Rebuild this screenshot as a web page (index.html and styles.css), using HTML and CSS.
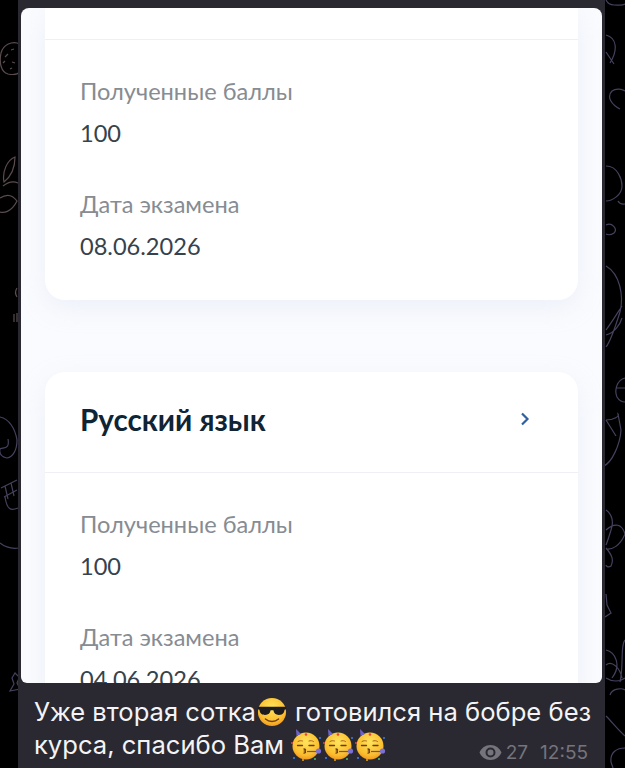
FILE: index.html
```html
<!DOCTYPE html>
<html lang="ru">
<head>
	<meta charset="utf-8">
	<title>Результаты экзаменов</title>
	<link rel="stylesheet" href="styles.css">
</head>
<body>

<!-- chat wallpaper, only the edges show around the bubble -->
<svg class="wallpaper" width="625" height="768" viewBox="0 0 625 768" fill="none">
	<g class="doodle-warm">
		<path d="M20 44C12 40 3 45 1 53C-1 63 1 72 8 74C13 75 18 74 20 72"/>
		<path d="M5 57l3-3M11 50l3-1M3 63l2-2M12 62l3 1M10 69l2-1"/>
		<path d="M15 157C7 160 2 172 4 182C9 178 15 170 15 157ZM3 186C8 182 14 181 18 183M0 198C6 194 12 194 17 201C11 213 3 213 0 212"/>
		<path d="M17 288c-2 3-2 6 0 9M17 313v9M14 314v8"/>
	</g>
	<g class="doodle-cold">
		<path d="M0 417C9 419 15 428 17 440C17 450 13 457 7 458C2 457-1 454 0 449C3 447 10 450 8 439"/>
		<path d="M1 488l16-8M4 497l13-7M5 486l3 13M11 483l3 13M5 497C7 510 11 511 18 508M0 543C6 548 12 549 19 548"/>
		<path d="M15 673l3 3 2 0-3 7 3 6-10 2 4-7-2-6z"/>
		<path d="M606 0c2 4 4 5 8 5 4 0 9 1 11-1M606 35C617 38 618 50 610 63M606 52l8 12M612 91c4-3 10-2 13 0M612 91c-6 6 0 14 8 18"/>
		<path d="M606 166C618 166 622 180 622 186 622 195 612 201 606 201M618 201c2 4 5 3 7 3M606 225c6-3 12 4 8 8-3 2-6 2-8 1"/>
		<path d="M606 266C620 274 624 296 620 312 615 328 610 342 606 347M606 330C612 322 618 312 622 306M606 335C614 333 620 325 622 318"/>
		<path d="M625 378C617 380 614 390 617 397 620 402 625 402 625 402M616 388h9"/>
		<path d="M606 420C614 420 620 416 618 414L621 430C620 445 612 462 604 466M606 420L616 436"/>
		<path d="M606 510C612 514 614 522 611 530 608 540 606 545 606 545M606 530C615 522 622 524 625 534 620 546 612 550 606 549M606 548C612 555 614 560 611 566 608 568 606 566 606 565"/>
		<path d="M606 594l1 11 4 8-6 4"/>
		<path d="M606 650C615 652 622 665 612 678M606 665C612 660 620 668 622 678M625 640C620 645 624 665 620 682M606 678C612 682 620 682 625 678M610 695C612 688 622 688 625 690"/>
		<path d="M606 716C612 722 618 730 625 736M625 748C617 748 610 752 611 762L613 768"/>
	</g>
</svg>

<!-- emoji drawn once, used below -->
<svg class="defs" width="0" height="0">
	<defs>
		<radialGradient id="faceFill" cx="50%" cy="35%" r="70%">
			<stop offset="0" stop-color="#ffe45c"/>
			<stop offset="0.7" stop-color="#fbbd2e"/>
			<stop offset="1" stop-color="#ef8f1c"/>
		</radialGradient>
		<symbol id="emojiCool" viewBox="0 0 32 32">
			<circle cx="16" cy="16" r="15" fill="url(#faceFill)"/>
			<path d="M1 10.500h30v2.600l-1.600.6c-.5 4-2.600 5.500-6 5.500-3.600 0-5.400-2-5.900-5h-3c-.5 3-2.300 5-5.900 5-3.400 0-5.500-1.500-6-5.500l-1.600-.6z" fill="#1d1c20"/>
			<path d="M9 23.500c4 3.500 10 3.500 14 0" stroke="#6e3a12" stroke-width="1.500" fill="none" stroke-linecap="round"/>
		</symbol>
		<symbol id="emojiParty" viewBox="0 0 32 32">
			<circle cx="15" cy="17" r="13.500" fill="url(#faceFill)"/>
			<path d="M10 5L5 0l.5 7z" fill="#6d63c9"/>
			<path d="M7 12.500c1.500-1 3-1 4.500-.5M18 12c1.500-.5 3-.5 4.500 .5" stroke="#a9641c" stroke-width="1" fill="none" stroke-linecap="round"/>
			<path d="M6.500 16.500h5M18 16.500h5" stroke="#6e3a12" stroke-width="1.300" fill="none" stroke-linecap="round"/>
			<path d="M13 20c2 .5 2 1.300 .5 2 1.500 .7 1.500 1.700-.5 2.200" stroke="#6e3a12" stroke-width="1.300" fill="none" stroke-linecap="round"/>
			<path d="M16 22.500h9" stroke="#5a50b4" stroke-width="1.200"/>
			<circle cx="27.500" cy="22" r="2.600" fill="#7b70d6"/>
			<circle cx="15" cy="5.500" r="1.300" fill="#e8463a"/>
			<circle cx="1" cy="14" r="1" fill="#e8463a"/>
			<circle cx="3" cy="29" r="1.100" fill="#3f7de0"/>
			<circle cx="24" cy="30" r="1" fill="#4ec06a"/>
			<circle cx="29" cy="9" r="1" fill="#3f7de0"/>
			<circle cx="12" cy="31" r="1" fill="#e8a33a"/>
		</symbol>
	</defs>
</svg>

<div class="bubble">
	<div class="photo">
		<section class="card">
			<div class="card-head card-head-cut"></div>
			<div class="card-body">
				<p class="label">Полученные баллы</p>
				<p class="value">100</p>
				<p class="label label-next">Дата экзамена</p>
				<p class="value">08.06.2026</p>
			</div>
		</section>

		<section class="card">
			<div class="card-head">
				<h2 class="subject">Русский язык</h2>
				<svg class="chevron" width="10" height="14" viewBox="0 0 10 14" fill="none">
					<path d="M2 1.500l5.500 5.500-5.500 5.500" stroke="#30609f" stroke-width="2.200"/>
				</svg>
			</div>
			<div class="card-body">
				<p class="label">Полученные баллы</p>
				<p class="value">100</p>
				<p class="label label-next">Дата экзамена</p>
				<p class="value">04.06.2026</p>
			</div>
		</section>
	</div>

	<div class="caption">
		<div class="caption-line">Уже вторая сотка<svg class="emoji emoji-cool"><use href="#emojiCool"/></svg> готовился на бобре без</div>
		<div class="caption-line caption-last">
			<span>курса, спасибо Вам
				<svg class="emoji emoji-party"><use href="#emojiParty"/></svg><svg class="emoji emoji-party"><use href="#emojiParty"/></svg><svg class="emoji emoji-party"><use href="#emojiParty"/></svg>
			</span>
			<span class="meta">
				<svg class="eye" width="23" height="15" viewBox="0 0 23 15">
					<path d="M11.500 0C6.500 0 2.300 3 .5 7.500 2.300 12 6.500 15 11.500 15s9.200-3 11-7.500C20.700 3 16.500 0 11.500 0zm0 12.500a5 5 0 1 1 0-10 5 5 0 0 1 0 10zm0-8a3 3 0 1 0 0 6 3 3 0 0 0 0-6z" fill="#75747c"/>
				</svg>
				<span class="views">27</span>
				<span>12:55</span>
			</span>
		</div>
	</div>
</div>

</body>
</html>
```

FILE: styles.css
```css
html, body {
	margin: 0;
	padding: 0;
}

body {
	width: 625px;
	height: 768px;
	background-color: #000;
	overflow: hidden;
}

.wallpaper {
	position: absolute;
	left: 0;
	top: 0;
}

.doodle-warm {
	stroke: #5a4c4e;
	stroke-width: 1.2;
}

.doodle-cold {
	stroke: #45425e;
	stroke-width: 1.2;
}

.defs {
	position: absolute;
}

.bubble {
	position: relative;
	width: 587px;
	height: 768px;
	margin-left: 18px;
	padding: 8px 3px 0;
	box-sizing: border-box;
	background-color: #2a2932;
	display: flex;
	flex-direction: column;
}

.photo {
	height: 675px;
	padding: 0 24px;
	flex-shrink: 0;
	box-sizing: border-box;
	overflow: hidden;
	border-radius: 8px 8px 6px 6px;
	background-color: #fafbfe;
	display: flex;
	flex-direction: column;
	gap: 72px;
}

.card {
	flex-shrink: 0;
	background-color: #fff;
	border-radius: 0 0 20px 20px;
	box-shadow: 0 8px 24px rgba(200, 210, 235, 0.25);
}

.card + .card {
	border-radius: 20px;
}

.card-head {
	height: 100px;
	padding: 0 48px 0 35px;
	display: flex;
	align-items: center;
	justify-content: space-between;
	border-bottom: 1px solid #eef0f5;
}

.card-head-cut {
	height: 31px;
}

.subject {
	margin: 0 0 5px;
	font: 700 29.6px "Lato", sans-serif;
	color: #0f2435;
}

.chevron {
	margin-bottom: 6px;
}

.card-body {
	padding: 36px 35px 39px;
}

.label,
.value {
	margin: 0;
	height: 30px;
	line-height: 30px;
	font-family: "Lato", sans-serif;
	font-size: 23.6px;
}

.label {
	color: #868c92;
}

.value {
	margin-top: 12px;
	color: #36424c;
}

.label-next {
	margin-top: 41px;
}

.caption {
	padding: 12px 14px 0 13px;
	font-family: "Inter", sans-serif;
	font-size: 25.6px;
	line-height: 33px;
	color: #f4f4f6;
	white-space: nowrap;
}

.caption-last {
	display: flex;
	justify-content: space-between;
}

.emoji {
	vertical-align: middle;
}

.emoji-cool {
	width: 30px;
	height: 30px;
	margin: -4px 1px 0;
}

.emoji-party {
	width: 32px;
	height: 32px;
	margin-top: -5px;
}

.meta {
	display: flex;
	align-items: center;
	padding-top: 8px;
	font-size: 19px;
	color: #75747c;
}

.eye {
	margin-right: 4px;
}

.views {
	margin-right: 12px;
}
```
